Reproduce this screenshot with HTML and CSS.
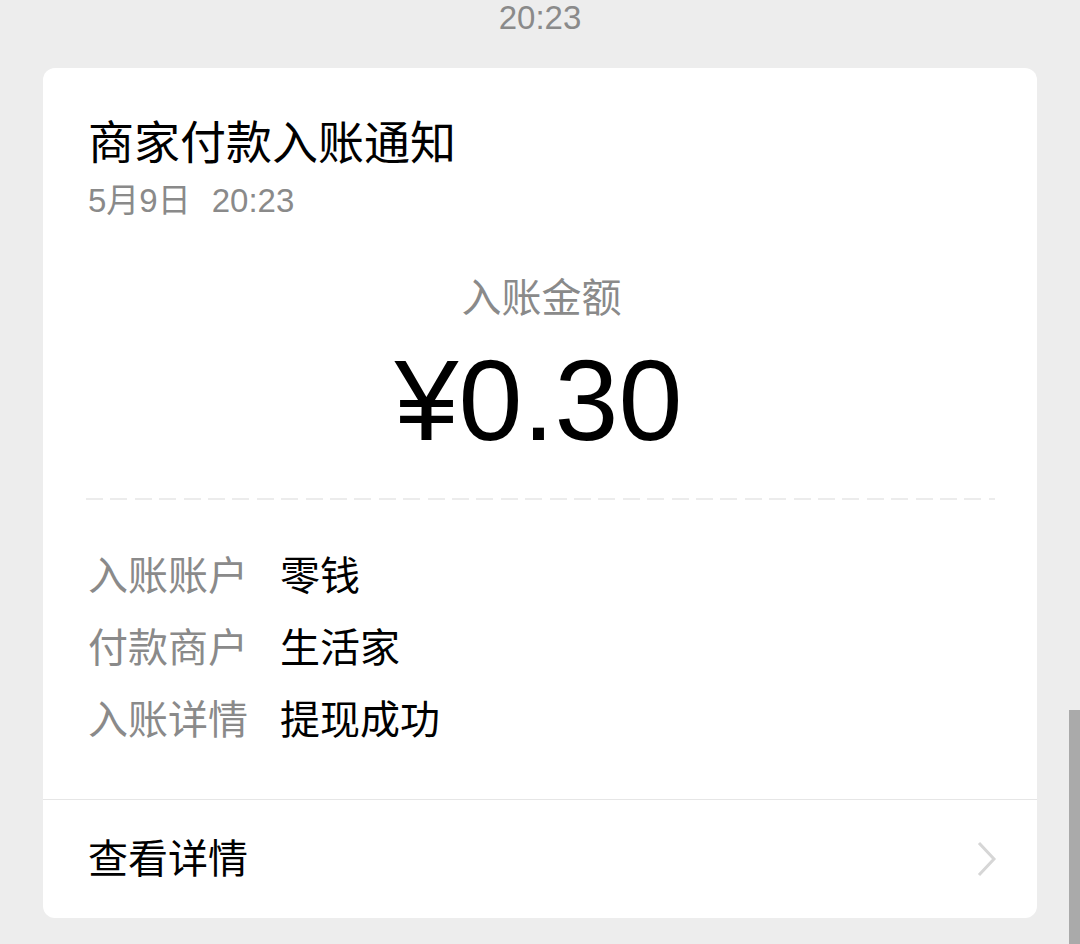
FILE: index.html
```html
<!DOCTYPE html>
<html lang="zh-CN">
<head>
<meta charset="utf-8">
<title>商家付款入账通知</title>
<link rel="stylesheet" href="styles.css">
</head>
<body>
<div class="page">
  <div class="time">20:23</div>
  <div class="card">
    <div class="card-body">
      <div class="title">商家付款入账通知</div>
      <div class="date"><span>5月9日</span><span class="date-time">20:23</span></div>
      <div class="amount-label">入账金额</div>
      <div class="amount">¥0.30</div>
      <div class="dash"></div>
      <div class="rows">
        <div class="row"><span class="label">入账账户</span><span class="value">零钱</span></div>
        <div class="row"><span class="label">付款商户</span><span class="value">生活家</span></div>
        <div class="row"><span class="label">入账详情</span><span class="value">提现成功</span></div>
      </div>
    </div>
    <div class="card-footer">
      <span class="footer-text">查看详情</span>
      <svg class="chevron" width="22" height="38" viewBox="0 0 22 38"><polyline points="3,3 18,19 3,35" fill="none" stroke="#d6d6d6" stroke-width="3"/></svg>
    </div>
  </div>
</div>
<div class="scrollbar"></div>
</body>
</html>
```
FILE: styles.css
```css
html, body {
  margin: 0;
  padding: 0;
  background: #ededed;
}
body {
  font-family: "Liberation Sans", "Noto Sans CJK SC", sans-serif;
  color: #111;
  height: 944px;
  overflow: hidden;
}
.page {
  padding: 0 43px;
}
.time {
  text-align: center;
  font-size: 33px;
  line-height: 1;
  color: #8a8a8a;
  padding-top: 1px;
  height: 67px;
}
.card {
  background: #fff;
  border-radius: 12px;
  height: 850px;
  display: flex;
  flex-direction: column;
}
.card-body {
  padding: 52px 42px 0 45px;
  height: 732px;
  box-sizing: border-box;
  border-bottom: 1px solid #e6e6e6;
}
.title {
  font-size: 46px;
  line-height: 1;
  color: #000;
}
.date {
  margin-top: 18px;
  font-size: 33px;
  line-height: 1;
  color: #8a8a8a;
  display: flex;
}
.date-time {
  margin-left: 21px;
}
.amount-label {
  margin-top: 61px;
  text-align: center;
  font-size: 40px;
  line-height: 1;
  color: #8a8a8a;
}
.amount {
  margin-top: 25px;
  margin-left: -6px;
  text-align: center;
  font-size: 115px;
  line-height: 1;
  color: #000;
}
.dash {
  margin-top: 40px;
  margin-left: -2px;
  height: 2px;
  background: repeating-linear-gradient(90deg, #ececec 0 17px, transparent 17px 24.4px);
}
.rows {
  margin-top: 40px;
}
.row {
  display: flex;
  font-size: 40px;
  line-height: 72px;
  height: 72px;
}
.label {
  color: #8a8a8a;
  width: 192px;
  flex: none;
}
.value {
  color: #000;
}
.card-footer {
  flex: 1;
  display: flex;
  align-items: center;
  justify-content: space-between;
  padding: 0 39px 0 45px;
}
.footer-text {
  font-size: 40px;
  line-height: 1;
  color: #000;
}
.chevron {
  display: block;
}
.scrollbar {
  position: absolute;
  right: 0;
  top: 710px;
  width: 11px;
  height: 234px;
  background: #aaaaaa;
}
```
